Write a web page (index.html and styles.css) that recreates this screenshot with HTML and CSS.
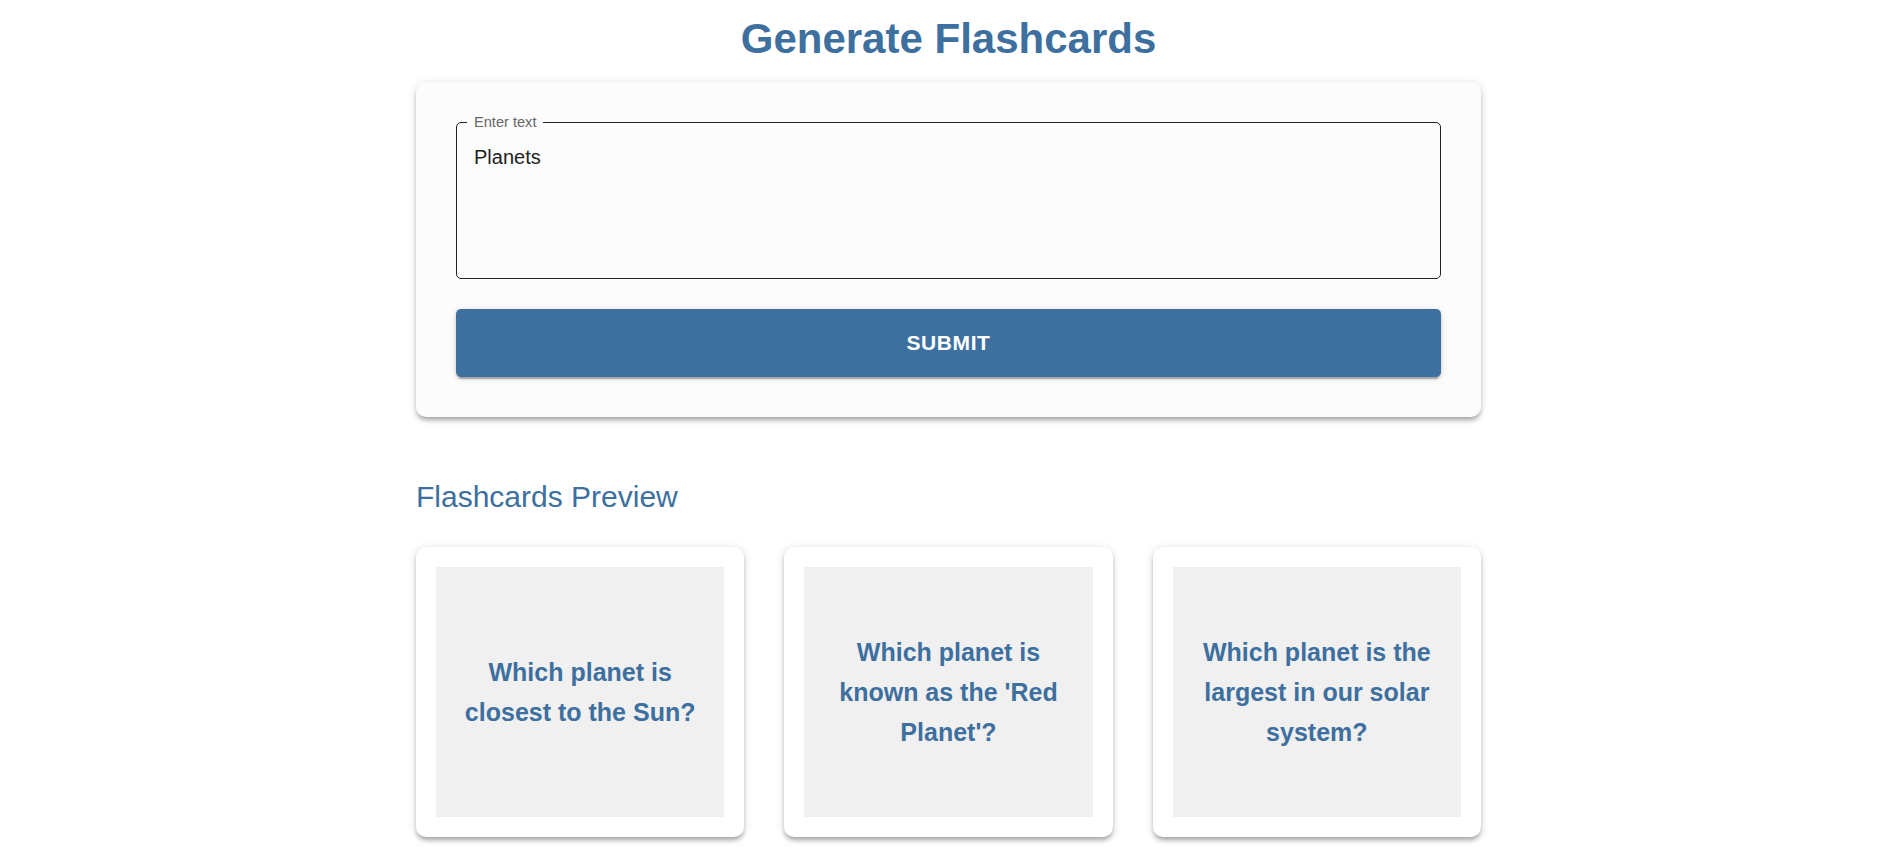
FILE: index.html
```html
<!DOCTYPE html>
<html lang="en">
<head>
<meta charset="utf-8">
<title>Generate Flashcards</title>
<link rel="stylesheet" href="styles.css">
</head>
<body>
<main class="page">
  <h1 class="title">Generate Flashcards</h1>
  <section class="form-card">
    <div class="field">
      <span class="field-label">Enter text</span>
      <div class="field-value">Planets</div>
    </div>
    <button class="submit" type="button">Submit</button>
  </section>

  <h2 class="preview-title">Flashcards Preview</h2>
  <div class="cards">
    <div class="card"><div class="card-face">Which planet is closest to the Sun?</div></div>
    <div class="card"><div class="card-face">Which planet is known as the 'Red Planet'?</div></div>
    <div class="card"><div class="card-face">Which planet is the largest in our solar system?</div></div>
  </div>
</main>
</body>
</html>
```
FILE: styles.css
```css
* { box-sizing: border-box; }

body {
  margin: 0;
  background: #ffffff;
  font-family: "Liberation Sans", Arial, sans-serif;
  color: rgba(0, 0, 0, 0.87);
}

.page {
  width: 1065px;
  margin: 0 auto;
  padding-top: 13px;
  padding-bottom: 40px;
}

.title {
  margin: 0 0 16.5px;
  font-size: 42px;
  line-height: 52.5px;
  font-weight: 700;
  text-align: center;
  color: #3d6f9f;
}

.form-card {
  background: #fcfcfc;
  border-radius: 10px;
  padding: 40px;
  box-shadow: 0 4px 4px -2px rgba(0,0,0,0.2), 0 4px 5px 0 rgba(0,0,0,0.14), 0 1px 10px 0 rgba(0,0,0,0.12);
}

.field {
  position: relative;
  height: 157px;
  border: 1px solid #222;
  border-radius: 5px;
  padding: 20px 17px;
}

.field-label {
  position: absolute;
  top: -10px;
  left: 10px;
  padding: 0 7px;
  background: #fcfcfc;
  font-size: 14.6px;
  line-height: 18px;
  color: #666666;
}

.field-value {
  font-size: 20px;
  line-height: 28.75px;
  color: #222;
}

.submit {
  display: flex;
  align-items: center;
  justify-content: center;
  width: 100%;
  height: 68px;
  margin-top: 30px;
  border: none;
  border-radius: 5px;
  background: #3d6f9f;
  color: #ffffff;
  font-family: "Liberation Sans", Arial, sans-serif;
  font-size: 21px;
  font-weight: 700;
  letter-spacing: 0.6px;
  text-transform: uppercase;
  box-shadow: 0 4px 1px -2px rgba(0,0,0,0.2), 0 2px 3px 0 rgba(0,0,0,0.14), 0 1px 6px 0 rgba(0,0,0,0.12);
}

.preview-title {
  margin: 60px 0 30px;
  font-size: 30px;
  line-height: 40px;
  font-weight: 400;
  color: #3d6f9f;
}

.cards {
  display: grid;
  grid-template-columns: repeat(3, 1fr);
  gap: 40px;
}

.card {
  background: #ffffff;
  border-radius: 10px;
  padding: 20px;
  box-shadow: 0 4px 4px -2px rgba(0,0,0,0.2), 0 4px 5px 0 rgba(0,0,0,0.14), 0 1px 10px 0 rgba(0,0,0,0.12);
}

.card-face {
  display: flex;
  align-items: center;
  justify-content: center;
  height: 250px;
  padding: 0 20px;
  background: #f0f0f0;
  text-align: center;
  font-size: 25px;
  line-height: 40px;
  font-weight: 700;
  color: #3d6f9f;
}
```
